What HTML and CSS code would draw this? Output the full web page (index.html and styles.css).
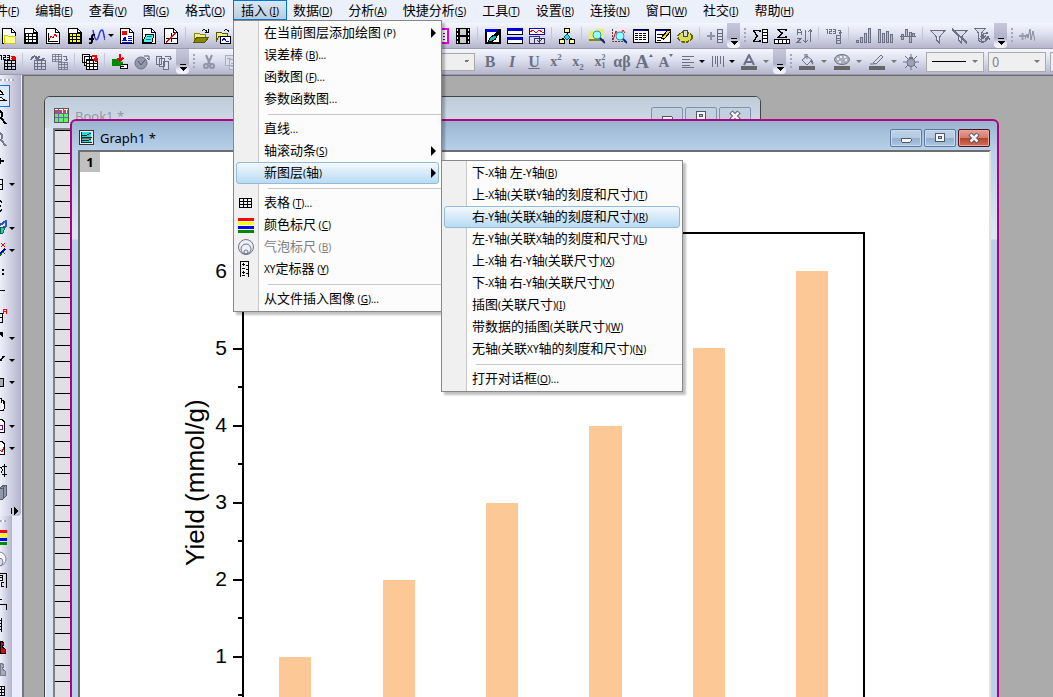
FILE: index.html
```html
<!DOCTYPE html>
<html lang="zh-CN">
<head>
<meta charset="utf-8">
<title>Graph1</title>
<link rel="stylesheet" href="styles.css">
</head>
<body>
<svg class="sprite" aria-hidden="true">
  <symbol id="page" viewBox="0 0 16 16"><path d="M1.500 .5H10.500L14.500 4.500V15.500H1.500Z" fill="#fff" stroke="#000"/><path d="M10.500 .5V4.500H14.500" fill="none" stroke="#000"/></symbol>
  <symbol id="grid" viewBox="0 0 12 10"><path d="M.5 .5H11.500V9.500H.5ZM0 3.500H12M0 6.500H12M3.500 0V10M7.500 0V10" fill="none" stroke="currentColor"/></symbol>
  <symbol id="more" viewBox="0 0 8 8"><path d="M1 0H7V1H1ZM1 3H8L4.500 7Z"/></symbol>
  <symbol id="min" viewBox="0 0 16 12"><rect x="3" y="6" width="10" height="4" rx="1" fill="#f5f5f5" stroke="#4f5868"/></symbol>
  <symbol id="max" viewBox="0 0 16 12"><rect x="3.500" y="1.500" width="9" height="8" fill="#f5f5f5" stroke="#4f5868"/><rect x="6.500" y="4.500" width="3" height="2" fill="#a8c0da" stroke="#4f5868"/></symbol>
  <symbol id="close" viewBox="0 0 16 12"><path d="M4 2L12 10M12 2L4 10" stroke="#4f5060" stroke-width="4.500"/><path d="M4.500 2.500L11.500 9.500M11.500 2.500L4.500 9.500" stroke="#f5f5f5" stroke-width="2.500"/></symbol>
</svg>

<nav class="menubar">
  <button>文件<small>(<u>F</u>)</small></button>
  <button>编辑<small>(<u>E</u>)</small></button>
  <button>查看<small>(<u>V</u>)</small></button>
  <button>图<small>(<u>G</u>)</small></button>
  <button>格式<small>(<u>O</u>)</small></button>
  <button class="open">插入<small> (<u>I</u>)</small></button>
  <button>数据<small>(<u>D</u>)</small></button>
  <button>分析<small>(<u>A</u>)</small></button>
  <button>快捷分析<small>(<u>S</u>)</small></button>
  <button>工具<small>(<u>T</u>)</small></button>
  <button>设置<small>(<u>R</u>)</small></button>
  <button>连接<small>(<u>N</u>)</small></button>
  <button>窗口<small>(<u>W</u>)</small></button>
  <button>社交<small>(<u>I</u>)</small></button>
  <button>帮助<small>(<u>H</u>)</small></button>
</nav>

<div class="toolbar first">
  <button aria-label="New project"><svg><use href="#page"/><path d="M3 7H6L7 8H14V15H3Z" fill="#ff9" stroke="#cc0"/></svg></button>
  <button aria-label="New workbook"><svg><use href="#page"/><use href="#grid" x="2" y="5" width="12" height="10"/></svg></button>
  <button aria-label="New graph"><svg><use href="#page"/><path d="M3.500 5V13.500H13" fill="none" stroke="#000"/><path d="M4 12L6 8L8 10L10 6L12 9" fill="none" stroke="#e00"/></svg></button>
  <button aria-label="New matrix"><svg><use href="#page"/><path d="M2 6H14V15H2Z" fill="#ff0"/><use href="#grid" x="2" y="5" width="12" height="10"/></svg></button>
  <button class="split" aria-label="New function"><svg class="smooth"><path d="M4 2C6 14 8 14 10 7C11 2 13 1 14 3L16 12" fill="none" stroke="#33f" stroke-width="1.500"/><path d="M6 7Q3 6 3 9V13Q3 16 0 15M0 11H5" fill="none" stroke="#000" stroke-width="2"/></svg><i></i></button>
  <button aria-label="New layout"><svg><use href="#page"/><path d="M3 3H8V7H3Z" fill="#f00"/><path d="M3 13L6 8L8 13Z" fill="#00d"/><path d="M9 8.500H13M9 10.500H13M9 12.500H13M3 14H13" stroke="#00d"/></svg></button>
  <button aria-label="New notes"><svg><use href="#page"/><path d="M5 6H13L11 14H2Z" fill="#5ee" stroke="#000"/><path d="M6 8.500H11M5 11.500H10" stroke="#088"/></svg></button>
  <button aria-label="New plot"><svg><use href="#page"/><path d="M8.500 5V14M3 10.500H14" stroke="#000"/><path d="M3 14L13 5" stroke="#f00" stroke-width="1.500"/></svg></button>
  <hr>
  <button aria-label="Open"><svg><path d="M1 5H6L7 6H12V9H4L1 14Z" fill="#ee8" stroke="#880"/><path d="M4 9H16L12 14H1Z" fill="#880" stroke="#550"/><path d="M9 3Q12 0 14 4M12 4H15V1" fill="none" stroke="#000"/></svg></button>
  <button aria-label="Open template"><svg><path d="M1 4H6L7 5H12V8H4L1 14Z" fill="#ee8" stroke="#550"/><path d="M5 8H15V15H5Z" fill="#fff" stroke="#000"/><path d="M7 13L9 10L11 13H14" fill="none" stroke="#00f"/><path d="M9 3Q12 0 14 4" fill="none" stroke="#000"/></svg></button>
  <span class="covered"></span>
  <button aria-label="Slide show"><svg><path d="M1 1H15V15H1Z" fill="#fff" stroke="#d0d" stroke-width="2"/><path d="M4 5H13M4 8H13M4 11H13" stroke="#808" stroke-dasharray="2 1"/></svg></button>
  <button aria-label="Movie"><svg><path d="M1 0H15V16H1Z"/><path d="M5 1H11V7H5ZM5 9H11V15H5Z" fill="#ccc"/><path d="M2.500 1V15M13.500 1V15" stroke="#fff" stroke-dasharray="2 2"/></svg></button>
  <hr>
  <button aria-label="Theme organizer"><svg><path d="M1 2H15V15H1Z" fill="#fff" stroke="#000" stroke-width="2"/><path d="M1 2.500H12" stroke="#00d" stroke-width="3"/><path d="M16 2L9 9" stroke="#000" stroke-width="3"/><path d="M10 7Q5 8 3 14Q9 14 12 9Z" fill="#1bb" stroke="#000"/></svg></button>
  <button aria-label="Stack windows"><svg><path d="M.5 .5H15.500V6.500H.5ZM.5 9.500H15.500V15.500H.5Z" fill="#fff" stroke="#000"/><path d="M0 1.500H16M0 10.500H16" stroke="#00c" stroke-width="3"/></svg></button>
  <button aria-label="Batch"><svg><path d="M0 1H16" stroke="#00c" stroke-width="2"/><path d="M.5 .5H15.500V6.500H.5Z" fill="#fff" stroke="#00c"/><path d="M1 4L4 2L7 5L10 2L13 4H15" fill="none" stroke="#f00"/><path d="M.5 8.500H10V15H.5ZM5 10H15.500V15.500H5Z" fill="#dde" stroke="#336"/><path d="M8 12L10 14L13 11" fill="none" stroke="#333"/></svg></button>
  <hr>
  <button aria-label="Project explorer"><svg><path d="M8 4V10M8 8L3 11M8 8L13 11" stroke="#000"/><path d="M5.500 .5H10.500V4.500H5.500Z" fill="#ff8" stroke="#000"/><path d="M.5 11.500H5.500V15.500H.5ZM10.500 11.500H15.500V15.500H10.500Z" fill="#ff8" stroke="#000"/><path d="M8 6L11 9L8 12L5 9Z" fill="#3dd" stroke="#066"/></svg></button>
  <hr>
  <button aria-label="Project search"><svg class="smooth"><path d="M0 3H6L7 1H15V13H0Z" fill="#ee6"/><path d="M0 12H15" stroke="#880" stroke-width="2"/><circle cx="8" cy="7" r="4" fill="#9ff" stroke="#29c"/><path d="M11 10L16 15" stroke="#128" stroke-width="2"/></svg></button>
  <button aria-label="Graph search"><svg class="smooth"><path d="M1.500 1V13.500H15" fill="none" stroke="#633" stroke-dasharray="2 1"/><path d="M2 12L5 3L8 9L12 2L14 5" fill="none" stroke="#e00"/><circle cx="9" cy="8" r="4" fill="#9ff" stroke="#29c"/><path d="M12 11L16 15" stroke="#128" stroke-width="2"/></svg></button>
  <button aria-label="Results log"><svg><path d="M.5 1.500H15.500V14.500H.5Z" fill="#fff" stroke="#000"/><path d="M0 2H16" stroke="#000" stroke-width="2"/><path d="M1 2.500H12" stroke="#00d"/><path d="M2 5.500H14M2 7.500H14M2 9.500H14M2 11.500H14" stroke="#000" stroke-dasharray="3 1"/></svg></button>
  <button aria-label="Script window"><svg><path d="M.5 1.500H15.500V14.500H.5Z" fill="#fff" stroke="#000"/><path d="M0 2H16" stroke="#000" stroke-width="2"/><path d="M1 2.500H12" stroke="#00d"/><path d="M2 6.500H8M2 9.500H7M2 12.500H6" stroke="#000"/><path d="M14 3L7 11" stroke="#000" stroke-width="4"/><path d="M14 3L8 10" stroke="#fd0" stroke-width="2"/></svg></button>
  <button aria-label="Code builder"><svg><ellipse cx="8" cy="9" rx="6" ry="4" fill="#bb3" stroke="#660" stroke-width="4" stroke-dasharray="3 1"/><ellipse cx="8" cy="9" rx="6" ry="4" fill="#dd5"/><path d="M6 2H10V8H6Z" fill="#ddd" stroke="#444"/></svg></button>
  <hr>
  <button class="dim" aria-label="Add column"><svg><path d="M0 8H8M4 4V12" stroke="#8d92a5" stroke-width="2"/><path d="M10.500 1.500H15.500V14.500H10.500ZM10 5.500H16M10 8.500H16M10 11.500H16" fill="#dde" stroke="#666c80"/></svg></button>
  <span class="overflow"><svg><use href="#more"/></svg></span><span class="grip"></span>
  <button aria-label="Statistics on columns"><svg><path d="M8 4V2.500H1.500L5 8L1.500 13.500H8V12" fill="none" stroke="#000" stroke-width="1.500"/><path d="M10.500 1.500H15.500V14.500H10.500ZM10 4.500H16M10 7.500H16M10 10.500H16" fill="#fff" stroke="#000"/></svg></button>
  <button aria-label="Statistics on rows"><svg><path d="M12 3V1.500H4L8 5L4 9.500H12V8" fill="none" stroke="#000" stroke-width="1.500"/><path d="M.5 11.500H15.500V15.500H.5ZM4.500 11V16M8.500 11V16M12.500 11V16" fill="#fff" stroke="#000"/></svg></button>
  <button class="dim" aria-label="Sort"><svg><path d="M1 7V3L2 1H4L5 3V7M1 4.500H5M1 10.500H5L1 14.500H5M9.500 2V14M7 12L9.500 14.500L12 12M14.500 14V2M12 4L14.500 1.500L16 4" fill="none" stroke="currentColor"/></svg></button>
  <hr>
  <button class="dim" aria-label="Set values"><svg><path d="M0 1.500H1.500V6M3 1.500H5.500V3.500H3.500V5.500H6M7 1.500H9.500V5.500H7M7 3.500H9M12 2.500H14.500V5M13 4L14.500 6L16 4M10.500 7.500H14.500V15.500H10.500ZM10 10.500H15M10 12.500H15" fill="none" stroke="currentColor"/></svg></button>
  <hr>
  <button class="dim" aria-label="Ascending bars"><svg><path d="M.5 12.500H2.500V14.500H.5ZM4.500 9.500H6.500V14.500H4.500ZM8.500 5.500H10.500V14.500H8.500ZM12.500 .5H14.500V14.500H12.500Z" fill="#bbc" stroke="currentColor"/></svg></button>
  <button class="dim" aria-label="Columns"><svg><path d="M.5 1.500H2.500V14.500H.5ZM4.500 5.500H6.500V14.500H4.500ZM8.500 3.500H10.500V14.500H8.500ZM12.500 6.500H14.500V14.500H12.500Z" fill="#bbc" stroke="currentColor"/></svg></button>
  <button class="dim" aria-label="Normalize"><svg><path d="M0 8.500H16M1.500 6.500H3.500V11.500H1.500ZM5.500 1.500H7.500V8.500H5.500ZM9.500 4.500H11.500V14.500H9.500ZM12.500 5.500H14.500V8.500H12.500Z" fill="#bbc" stroke="currentColor"/></svg></button>
  <hr>
  <button class="dim" aria-label="Filter"><svg><path d="M1 2.500H15L9.500 9V15L6.500 12V9Z" fill="#dde" stroke="currentColor"/></svg></button>
  <button class="dim" aria-label="Remove filter"><svg><path d="M3 2.500H15L9.500 9V15L6.500 12V9Z" fill="#dde" stroke="currentColor"/><path d="M0 1L15 15" stroke="currentColor" stroke-width="2"/></svg></button>
  <button class="dim" aria-label="Reapply filter"><svg><path d="M1 .5H11L7.500 5V12L4.500 10V5Z" fill="#dde" stroke="currentColor"/><path d="M14 5Q8 5 9 9M7 8L9 10L12 8M4 12Q10 17 13 11M11 12L14 9L16 12" fill="none" stroke="currentColor" stroke-width="1.500"/></svg></button>
  <span class="overflow"><svg><use href="#more"/></svg></span><span class="grip"></span>
  <button class="dim" aria-label="Baseline"><svg class="smooth"><path d="M0 8H7M3.500 5V12" stroke="#999eaf" stroke-width="2"/><path d="M6 11L8 6L9 10L11 1L12 12L14 3L16 13" fill="none" stroke="#858a9d"/></svg></button>
</div>

<div class="toolbar second">
  <button aria-label="Set column values"><svg><path d="M0 1.500H1.500V6M3 1.500H5.500V3.500H3.500V5.500H6M7 1.500H9.500V5.500H7M7 3.500H9" fill="none" stroke="#000"/><path d="M11 2.500H14V5M12 4L14 6L16 4" fill="none" stroke="#e00" stroke-width="1.500"/><use href="#grid" x="4" y="6" width="12" height="10"/></svg></button>
  <hr>
  <button class="dim" aria-label="Recalculate"><svg><path d="M1 6Q4 0 7 4M5 4L8 5L9 2M14 4Q11 8 8 5" fill="none" stroke="currentColor" stroke-width="2"/><use href="#grid" x="4" y="6" width="12" height="10"/></svg></button>
  <button class="dim" aria-label="Transpose"><svg><use href="#grid" x="0" y="0" width="10" height="8"/><path d="M11 2.500H14V6M12 5L14 7L16 5" fill="none" stroke="currentColor"/><use href="#grid" x="6" y="8" width="10" height="8"/></svg></button>
  <hr>
  <button aria-label="Duplicate"><svg><path d="M.5 .5H7.500V8.500H.5ZM2.500 2.500H9.500V11.500H2.500Z" fill="#fff" stroke="#000"/><path d="M4.500 5.500H15.500V15.500H4.500Z" fill="#fff" stroke="#000"/><use href="#grid" x="4" y="6" width="12" height="10"/><path d="M10 2H14V6M12 5L14 7L16 5" fill="none" stroke="#e00" stroke-width="1.500"/></svg></button>
  <hr>
  <button aria-label="Connect"><svg><path d="M0 5H9V12H0ZM5 8H11V11H5Z" fill="#080"/><path d="M8 0V6M6 4L8 7L11 4" fill="none" stroke="#e00" stroke-width="1.500"/><path d="M9 10.500H15.500V14.500H8.500V12.500H12" fill="#fff" stroke="#000"/></svg></button>
  <button class="dim" aria-label="Clock"><svg class="smooth"><circle cx="7" cy="9" r="6" fill="#9297aa" stroke="currentColor"/><path d="M4 7L7 11L11 6M10 2H15V6M13 4L15 6" fill="none" stroke="#555b6d"/></svg></button>
  <button class="dim" aria-label="Copy pages"><svg><path d="M.5 2.500H5.500V10.500H.5ZM3.500 4.500H8.500V12.500H3.500ZM7.500 7.500H12.500V15.500H7.500Z" fill="#dde" stroke="currentColor"/><path d="M9 2.500H14V6M12 4L14 6L16 4" fill="none" stroke="currentColor"/></svg></button>
  <span class="overflow"><svg><use href="#more"/></svg></span><span class="grip"></span>
  <button class="dim" aria-label="Cut"><svg class="smooth"><path d="M5 1L9 10M11 1L7 10" stroke="#8e93a8" stroke-width="2"/><circle cx="5" cy="12" r="2" fill="none" stroke="#8e93a8" stroke-width="2"/><circle cx="11" cy="12" r="2" fill="none" stroke="#8e93a8" stroke-width="2"/></svg></button>
  <button class="dim" aria-label="Copy"><svg><path d="M2 1H10V11H2ZM6 5H14V15H6Z" fill="#dde" stroke="#a9adc0"/><path d="M4 4H8M8 9H12M8 12H12" stroke="#a9adc0"/></svg></button>
  <select class="font" aria-label="Font"><option></option></select>
  <button class="dim serif" aria-label="Bold"><b>B</b></button>
  <button class="dim serif" aria-label="Italic"><b><em>I</em></b></button>
  <button class="dim serif" aria-label="Underline"><u>U</u></button>
  <button class="dim serif little" aria-label="Superscript"><b>x</b><sup>2</sup></button>
  <button class="dim serif little" aria-label="Subscript"><b>x</b><sub>2</sub></button>
  <button class="dim serif little" aria-label="Super and subscript"><b>x</b><span class="stack"><span>2</span><span>1</span></span></button>
  <button class="dim serif greek" aria-label="Greek">αβ</button>
  <button class="dim serif big" aria-label="Increase font">A<i class="up"></i></button>
  <button class="dim serif mid" aria-label="Decrease font">A<i class="down"></i></button>
  <button class="dim split" aria-label="Align"><svg><path d="M2 2.500H14M2 5.500H10M2 8.500H14M2 11.500H10M2 13.500H14" stroke="currentColor"/></svg><i></i></button>
  <button class="dim split" aria-label="Distribute"><svg><path d="M2.500 2V13M5.500 2V10M7.500 2V13M10.500 2V10M13.500 2V13" stroke="currentColor"/></svg><i></i></button>
  <button class="dim split wide" aria-label="Font color"><svg class="smooth"><path d="M3 11L8 1L13 11M5 8H11" fill="none" stroke="currentColor" stroke-width="2"/><path d="M0 12H16V16H0Z" fill="#666"/></svg><i class="pale"></i></button>
  <span class="overflow"><svg><use href="#more"/></svg></span><span class="grip"></span>
  <button class="dim split wide" aria-label="Fill color"><svg class="smooth"><path d="M3 6L8 2L13 6L8 11ZM6 4V0H8V5" fill="#dde" stroke="currentColor"/><path d="M12 6Q15 6 14 11L11 7" fill="currentColor"/><path d="M0 12H16V16H0Z" fill="#666"/></svg><i class="pale"></i></button>
  <button class="dim split wide" aria-label="Palette"><svg class="smooth"><ellipse cx="8" cy="5.500" rx="7.500" ry="5" fill="#a9adbc" stroke="currentColor"/><path d="M3 5H5M6 3H8M10 3H12M11 6H13M5 8H7" stroke="#e8e9f2" stroke-width="2"/><path d="M0 12H16V16H0Z" fill="#666"/></svg><i class="pale"></i></button>
  <button class="dim split wide" aria-label="Line color"><svg class="smooth"><path d="M4 9L12 1L14 3L7 10ZM1 10H5" fill="#dde" stroke="currentColor"/><path d="M0 12H16V16H0Z" fill="#666"/></svg><i class="pale"></i></button>
  <button class="dim" aria-label="Highlight"><svg class="smooth"><path d="M8 0V4M2 2L5 5M14 2L11 5M0 8H4M12 8H16M2 14L5 11M14 14L11 11M8 12V16" stroke="currentColor"/><circle cx="8" cy="8.500" r="4" fill="#9da2b3" stroke="currentColor"/><path d="M6 3H10V5H6Z" fill="currentColor"/></svg></button>
  <button class="combo line" aria-label="Line style"><span></span><i class="pale"></i></button>
  <button class="combo" aria-label="Line width"><span>0</span><i class="pale"></i></button>
  <button class="combo" aria-label="Pattern"><span></span></button>
</div>

<main class="work">
  <aside class="dock">
    <div class="tools">
      <span class="hgrip"></span>
      <button class="on" aria-label="Pointer"><svg><path d="M0 2L3 6H0M0 9L5 12H0" fill="#fff" stroke="#000"/></svg></button>
      <button aria-label="Zoom in"><svg><path d="M0 1Q4 4 1 8M1 8L6 14" fill="none" stroke="#000" stroke-width="2"/></svg></button>
      <button aria-label="Zoom out"><svg><path d="M0 1Q4 4 1 8M1 8L6 14" fill="none" stroke="#777c8e" stroke-width="2"/></svg></button>
      <button aria-label="Reader"><svg><path d="M0 7H4M0 4V10" stroke="#000" stroke-width="2"/></svg></button>
      <button aria-label="Data reader"><svg><path d="M0 3.500H2.500V13.500H0M0 8.500H3" fill="none" stroke="#000"/></svg><i></i></button>
      <button aria-label="Cursor"><svg><path d="M0 3L2 4M0 8H1M0 13L2 12" stroke="#000" stroke-width="2"/></svg></button>
      <button aria-label="Region"><svg><path d="M0 5L6 1V6L0 10" fill="none" stroke="#35c" stroke-width="2"/><path d="M0 7H5L3 13H0Z" fill="#2cc" stroke="#064"/></svg><i></i></button>
      <button aria-label="Mask"><svg><path d="M1 1L5 5M5 1L1 5" stroke="#e00"/><path d="M0 12L5 7" stroke="#00c" stroke-width="2"/><path d="M0 14L3 10L5 12" fill="none" stroke="#070"/></svg><i></i></button>
      <button aria-label="Draw data"><svg><path d="M2 5H4V7H2ZM2 9H4V11H2Z"/></svg></button>
      <button aria-label="Line end"><svg><path d="M0 4.500H5" stroke="#000"/></svg></button>
      <button aria-label="Annotation"><svg><path d="M0 5.500H2.500V14.500H0M0 9.500H3" fill="none" stroke="#000"/><path d="M3.500 6V1.500H6.500V6M3 3.500H6" fill="none" stroke="#f00"/></svg></button>
      <button aria-label="Arrow"><svg><path d="M0 2H3V7L0 5Z"/></svg><i></i></button>
      <button aria-label="Line"><svg><path d="M0 9L4 4" stroke="#000" stroke-width="2"/></svg><i></i></button>
      <button aria-label="Rectangle"><svg><path d="M0 4.500H3.500V12.500H0" fill="#aaa" stroke="#000"/></svg><i></i></button>
      <button aria-label="Pan"><svg><path d="M0 2.500H1V7M1 4.500H3V8M3 5.500H4.500V12L3 14.500H0" fill="#fff" stroke="#000"/></svg></button>
      <button aria-label="Insert graph"><svg><path d="M0 1.500H2L4.500 4V14.500H0" fill="#fff" stroke="#000"/><path d="M0 7.500H2.500V11.500H0" fill="none" stroke="#808"/></svg><i></i></button>
      <button aria-label="Insert curve"><svg><path d="M0 1.500H2L4.500 4V14.500H0" fill="#fff" stroke="#000"/><path d="M0 10L2 12L4 7" fill="none" stroke="#e00"/></svg><i></i></button>
      <button aria-label="Rescale"><svg><path d="M4.500 2V15M2 4.500H7M2 12.500H7M0 5Q4 7 1 11" fill="none" stroke="#000"/></svg></button>
      <button aria-label="Cube"><svg><path d="M0 4L4 1H6V12L3 15H0" fill="#9297aa" stroke="#555b6d"/><path d="M3 4V15M0 4H3L6 1" fill="none" stroke="#555b6d"/></svg></button>
      <button class="tail" aria-label="More tools"><svg><path d="M1 6H2V12H1ZM4 5L8 9L4 13Z"/></svg></button>
    </div>
    <div class="tools narrow">
      <span class="hgrip"></span>
      <button aria-label="Color scale"><svg><path d="M0 2.500H7" stroke="#f00" stroke-width="3"/><path d="M0 6.500H7" stroke="#ff0" stroke-width="3"/><path d="M0 10.500H7" stroke="#00f" stroke-width="3"/><path d="M0 14.500H7" stroke="#080" stroke-width="3"/></svg></button>
      <button aria-label="Bubble scale"><svg class="smooth"><circle cx="-1" cy="8" r="7" fill="#fff" stroke="#777c8e"/><circle cx="-1" cy="11" r="4" fill="#dde" stroke="#777c8e"/></svg></button>
      <button aria-label="Legend"><svg><path d="M0 .5H6.500V15" fill="none" stroke="#000"/><path d="M0 2.500H2.500V7.500H0M0 4.500H3M4 9.500H1.500V13.500H4" fill="none" stroke="#000"/></svg></button>
      <button aria-label="Axis"><svg><path d="M0 4.500H2M0 9.500H6.500V15" fill="none" stroke="#000"/></svg></button>
      <button aria-label="XY scaler"><svg><path d="M1.500 1V15M0 3.500H2M0 6.500H2M0 9.500H2M0 12.500H2" stroke="#000"/></svg></button>
      <button aria-label="Stamp"><svg><path d="M0 2H2L4 5L2 8L5 10V14H0Z" fill="#e00" stroke="#000"/></svg></button>
      <button aria-label="Time stamp"><svg><path d="M0 2H2L4 5L2 8L5 10V14H0Z" fill="#aab" stroke="#777c8e"/></svg></button>
      <button aria-label="Table"><svg><path d="M0 3.500H4.500V12.500H0M0 6.500H5M0 9.500H5M1.500 3V13" fill="none" stroke="#000"/></svg></button>
    </div>
  </aside>

  <section class="mdi">
    <article class="window book">
      <header>
        <svg class="wicon"><path d="M.5 .5H14.500V14.500H.5Z" fill="#fff" stroke="#555"/><path d="M1 6H14V14H1Z" fill="#6e6"/><path d="M1 3H14" stroke="#f33" stroke-width="3" stroke-dasharray="3 1"/><path d="M1 5.500H14M1 9.500H14M4.500 1V14M9.500 1V14" stroke="#66b"/></svg>
        <h2>Book1 *</h2>
        <button aria-label="Minimize"><svg><use href="#min"/></svg></button><button aria-label="Maximize"><svg><use href="#max"/></svg></button><button aria-label="Close"><svg class="smooth"><use href="#close"/></svg></button>
      </header>
      <div class="rows"></div>
    </article>

    <article class="window graph">
      <header>
        <svg class="wicon"><path d="M.5 .5H14.500V14.500H.5Z" fill="#f5eeee" stroke="#333"/><path d="M3 2H12V12H3Z" fill="#2dd"/><path d="M2.500 2V12.500H13M3 7.500H13M3 5L8 5L12 3M3 10L8 11L12 9" fill="none" stroke="#033"/><path d="M3 8.500H12" stroke="#f33"/></svg>
        <h2>Graph1 *</h2>
        <button aria-label="Minimize"><svg><use href="#min"/></svg></button><button aria-label="Maximize"><svg><use href="#max"/></svg></button><button class="x" aria-label="Close"><svg class="smooth"><use href="#close"/></svg></button>
      </header>
      <div class="canvas">
        <button class="layer">1</button>
        <svg class="chart" role="img" aria-label="Yield (mmol/g)">
          <g fill="#fcc896">
            <path d="M199 505H231V800H199ZM303 428H335V800H303ZM406 351H438V800H406ZM509 274H542V800H509ZM613 196H645V800H613ZM716 119H748V800H716Z"/>
          </g>
          <path d="M163 800V81H784V800" fill="none" stroke="#000" stroke-width="2"/>
          <path d="M153 120H163M153 197H163M153 274H163M153 351H163M153 428H163M153 505H163M158 158H163M158 235H163M158 312H163M158 389H163M158 466H163M158 543H163" stroke="#000" stroke-width="2"/>
          <g text-anchor="end" font-size="21">
            <text x="147" y="126">6</text><text x="147" y="203">5</text><text x="147" y="280">4</text><text x="147" y="357">3</text><text x="147" y="434">2</text><text x="147" y="511">1</text>
          </g>
          <text transform="translate(124 414) rotate(-90)" font-size="26">Yield (mmol/g)</text>
        </svg>
      </div>
    </article>
  </section>
</main>

<div class="menu insert" role="menu">
  <button>在当前图层添加绘图<small> (P)</small><b class="sub"></b></button>
  <button>误差棒<small> (<u>B</u>)...</small></button>
  <button>函数图<small> (<u>F</u>)...</small></button>
  <button>参数函数图<small>...</small></button>
  <hr>
  <button>直线<small>...</small></button>
  <button>轴滚动条<small>(<u>S</u>)</small><b class="sub"></b></button>
  <button class="hot">新图层<small>(</small>轴<small>)</small><b class="sub"></b></button>
  <hr>
  <button><svg><path d="M1.500 3.500H13.500V12.500H1.500ZM1 6.500H14M1 9.500H14M5.500 3V13M9.500 3V13" fill="none" stroke="#000"/></svg>表格<small> (<u>T</u>)...</small></button>
  <button><svg><path d="M0 2.500H16" stroke="#f00" stroke-width="3"/><path d="M0 6.500H16" stroke="#ff0" stroke-width="3"/><path d="M0 10.500H16" stroke="#00f" stroke-width="3"/><path d="M0 14.500H16" stroke="#080" stroke-width="3"/></svg>颜色标尺<small> (<u>C</u>)</small></button>
  <button class="off"><svg class="smooth"><circle cx="8" cy="8" r="7.500" fill="#eef0f8" stroke="#6d7488"/><circle cx="8" cy="10" r="5" fill="none" stroke="#6d7488"/><circle cx="8" cy="13" r="2" fill="none" stroke="#6d7488"/></svg>气泡标尺<small> (<u>B</u>)</small></button>
  <button><svg><path d="M2 0H3V16H2ZM10 0H11V16H10ZM2 0H11V1H2Z"/><path d="M4 3.500H7M5.500 2V5M8 4.500H10M4 7.500H7M8 8.500H10M4 11.500H7M5.500 10V13M8 12.500H10M4 14.500H7" stroke="#000"/></svg><small>XY</small>定标器<small> (<u>Y</u>)</small></button>
  <hr>
  <button>从文件插入图像<small> (<u>G</u>)...</small></button>
</div>

<div class="menu axes" role="menu">
  <button>下<small>-X</small>轴<small> </small>左<small>-Y</small>轴<small>(<u>B</u>)</small></button>
  <button>上<small>-X</small>轴<small>(</small>关联<small>Y</small>轴的刻度和尺寸<small>)(<u>T</u>)</small></button>
  <button class="hot">右<small>-Y</small>轴<small>(</small>关联<small>X</small>轴的刻度和尺寸<small>)(<u>R</u>)</small></button>
  <button>左<small>-Y</small>轴<small>(</small>关联<small>X</small>轴的刻度和尺寸<small>)(<u>L</u>)</small></button>
  <button>上<small>-X</small>轴<small> </small>右<small>-Y</small>轴<small>(</small>关联尺寸<small>)(<u>X</u>)</small></button>
  <button>下<small>-X</small>轴<small> </small>右<small>-Y</small>轴<small>(</small>关联尺寸<small>)(<u>Y</u>)</small></button>
  <button>插图<small>(</small>关联尺寸<small>)(<u>I</u>)</small></button>
  <button>带数据的插图<small>(</small>关联尺寸<small>)(<u>W</u>)</small></button>
  <button>无轴<small>(</small>关联<small>XY</small>轴的刻度和尺寸<small>)(<u>N</u>)</small></button>
  <hr>
  <button>打开对话框<small>(<u>O</u>)...</small></button>
</div>
</body>
</html>
```
FILE: styles.css
```css
* { box-sizing: border-box; }
body {
  margin: 0;
  height: 100vh;
  overflow: hidden;
  display: flex;
  flex-direction: column;
  background: #e9ecfa;
  color: #000;
  font: 13px/18px "Noto Sans CJK SC", sans-serif;
}
button {
  margin: 0;
  padding: 0;
  border: 0;
  background: none;
  color: inherit;
  font: inherit;
  flex: none;
}
small { font-family: "Noto Sans", sans-serif; font-size: 10px; white-space: pre; }
u { text-underline-offset: 1px; }
svg { display: block; flex: none; width: 16px; height: 16px; shape-rendering: crispEdges; }
.sprite { position: absolute; width: 0; height: 0; }
.smooth { shape-rendering: auto; }
i {
  flex: none;
  border: 3px solid transparent;
  border-top-color: #000;
  border-bottom: 0;
}
i.pale { border-top-color: #777; }

/* Menu bar */
.menubar { display: flex; flex: none; height: 23px; margin-left: -26px; background: #ecf0fb; white-space: nowrap; }
.menubar button { height: 20px; padding: 0 7px; border: 1px solid transparent; line-height: 17px; }
.menubar .open { margin-right: -2px; border-color: #0078d7; background: linear-gradient(#d9e8f5, #b9cbdc); }

/* Toolbars */
.toolbar {
  display: flex;
  flex: none;
  align-items: center;
  height: 26px;
  overflow: hidden;
  border-bottom: 1px solid #9b9bb3;
  background: linear-gradient(#f4f7fd, #dcdfee 45%, #b5b5cc);
}
.toolbar > button { display: flex; align-items: center; justify-content: center; width: 22px; height: 24px; }
.first > button:first-child { margin-left: -2px; }
.second > button:first-child { margin-left: -3px; }
.toolbar .split { width: 30px; gap: 3px; }
.toolbar .wide { width: 35px; gap: 6px; }
.toolbar .dim { color: #6b7084; }
.toolbar hr { flex: none; width: 1px; height: 18px; margin: 0 4px 0 3px; border: 0; background: #c4c5d2; }
.covered { flex: none; width: 196px; }
.overflow {
  display: flex;
  flex: none;
  align-items: flex-end;
  justify-content: center;
  width: 13px;
  height: 25px;
  margin-left: 1px;
  padding-bottom: 2px;
  border-radius: 0 0 4px 4px;
  background: linear-gradient(#c8c8dc, #b0b0c8 60%, #f0f0fa 85%);
}
.overflow svg { width: 8px; height: 8px; }
.grip { flex: none; width: 2px; height: 16px; margin: 0 3px 0 4px; background: repeating-linear-gradient(#a5a5b5 0 2px, transparent 2px 4px); }
.font {
  flex: none;
  width: 233px;
  height: 18px;
  margin-right: 4px;
  border: 1px solid #aaa;
  background:
    linear-gradient(45deg, transparent 50%, #777 50%) right 7px center / 3px 3px no-repeat,
    linear-gradient(-45deg, transparent 50%, #777 50%) right 4px center / 3px 3px no-repeat,
    #efeff0;
  appearance: none;
}
.toolbar .serif { font: 16px/20px "Liberation Serif", serif; font-weight: bold; }
.toolbar .little { font-size: 14px; }
.little sup, .little sub { margin: 0; font-size: 9px; line-height: 9px; }
.little sup { align-self: flex-start; padding-top: 3px; }
.little sub { align-self: flex-end; padding-bottom: 2px; }
.stack { display: flex; flex-direction: column; font-size: 8px; line-height: 8px; }
.toolbar .big { font-size: 19px; }
.toolbar .mid { font-size: 15px; }
.up, .down { align-self: flex-start; margin-top: 4px; border-width: 2px; }
.up { border-top: 0; border-bottom: 3px solid #6b7084; }
.down { border-top: 3px solid #6b7084; }
.toolbar .combo {
  width: 58px;
  height: 20px;
  margin-left: 4px;
  padding: 0 5px 0 3px;
  justify-content: space-between;
  border: 1px solid #aaa;
  background: #efeff0;
  color: #7c8796;
}
.combo.line span { width: 34px; height: 1px; margin-left: 2px; background: #000; }

/* Workspace */
.work { display: flex; flex: 1; min-height: 0; }
.dock { flex: none; width: 22px; overflow: hidden; background: #e9ecfa; }
.tools { width: 21px; padding-top: 4px; border-radius: 0 0 4px 0; background: linear-gradient(90deg, #eceffa, #b4b4cc); }
.tools.narrow { width: 12px; }
.tools button { display: flex; align-items: center; width: 21px; height: 22px; gap: 1px; }
.tools svg { width: 8px; }
.tools .on { width: 10px; border: 1px solid #0078d7; border-left: 0; background: #dbe9f8; }
.tools .tail { height: 13px; padding-left: 10px; }
.hgrip { display: block; width: 14px; height: 2px; margin-bottom: 4px; background: repeating-linear-gradient(90deg, #aaaaba 0 2px, #fff 2px 4px); }
.narrow .hgrip { width: 6px; }
.mdi {
  position: relative;
  flex: 1;
  overflow: hidden;
  border-top: 1px solid #696969;
  border-left: 2px solid #767680;
  background: #ababab;
}

/* Document windows */
.window { position: absolute; display: flex; flex-direction: column; border-radius: 6px 6px 0 0; }
.window header { display: flex; flex: none; align-items: center; gap: 2px; }
.window h2 { flex: 1; margin: 0; padding-left: 4px; font: 13px/18px "Noto Sans", sans-serif; }
.window header button {
  display: flex;
  align-items: center;
  justify-content: center;
  width: 32px;
  height: 18px;
  border: 1px solid #60799b;
  border-radius: 2px;
  background: linear-gradient(#bfd3e9, #b3cae3 48%, #93afcc 50%, #abc6e2);
  box-shadow: inset 0 0 0 1px #c9dbee;
}
.window header button svg { height: 12px; }
.window header .x {
  border-color: #4d1420;
  background: linear-gradient(#e5a198, #d57b6c 48%, #b8402c 50%, #d1705a);
  box-shadow: inset 0 0 0 1px #e3a79c;
}
.window .wicon { width: 15px; height: 15px; }
.book { left: 20px; top: 20px; width: 717px; height: 700px; border: 1px solid #444; background: #d7e4f2; box-shadow: inset 1px 1px #f4f8fc; }
.book header { height: 31px; padding: 6px 9px 0; background: linear-gradient(#becbd8, #d2deea); border-radius: 5px 5px 0 0; color: #929aa3; }
.book header button { border-color: #8091b0; background: #c2d0df; box-shadow: none; }
.book .rows { flex: 1; margin: 0 8px; border: 2px solid #808080; background: repeating-linear-gradient(#e0dfe3 0 15px, #000 15px 16px); background-position: 0 8px; }
.graph { left: 46px; top: 43px; width: 929px; height: 700px; border: 2px solid #b4007f; background: linear-gradient(#9ab4d1, #b9d1ea 30px, #dce8f5 118px, #b9d1ea 119px); }
.graph header { height: 29px; padding: 4px 7px 0; }
.graph .canvas { position: relative; flex: 1; margin: 0 6px; border: 2px solid #6e6e6e; border-right-color: #e3e3e3; background: #fff; }
.layer { position: absolute; left: 0; top: 0; width: 20px; height: 20px; background: #c0c0c0; font: bold 13px/20px "Noto Sans", sans-serif; }
.chart { width: 100%; height: 100%; font-family: "Liberation Sans", sans-serif; }

/* Drop-down menus */
.menu {
  position: absolute;
  padding: 1px 0;
  border: 1px solid #888;
  background: linear-gradient(90deg, #f0f0f0 24px, #c8c8c8 24px 25px, #fcfcfc 25px);
  box-shadow: 3px 3px 2px rgba(0, 0, 0, .25);
  white-space: nowrap;
}
.menu button {
  position: relative;
  display: block;
  width: calc(100% - 4px);
  height: 22px;
  margin: 0 2px;
  padding: 0 0 2px 27px;
  border: 1px solid transparent;
  border-radius: 3px;
  line-height: 18px;
  text-align: left;
}
.menu button > svg { position: absolute; left: 1px; top: 2px; }
.menu hr { height: 1px; margin: 4px 0 3px 34px; border: 0; background: #c8c8c8; }
.menu .hot { border-color: #93bbd8; background: linear-gradient(#f3f9fd, #d5eaf9 50%, #b8dbf4); }
.menu .off { color: #808080; }
.sub { position: absolute; right: 2px; top: 5px; border: 5px solid transparent; border-left-color: #000; border-right: 0; }
.insert { left: 233px; top: 20px; width: 209px; }
.axes { left: 441px; top: 160px; width: 242px; }
```
